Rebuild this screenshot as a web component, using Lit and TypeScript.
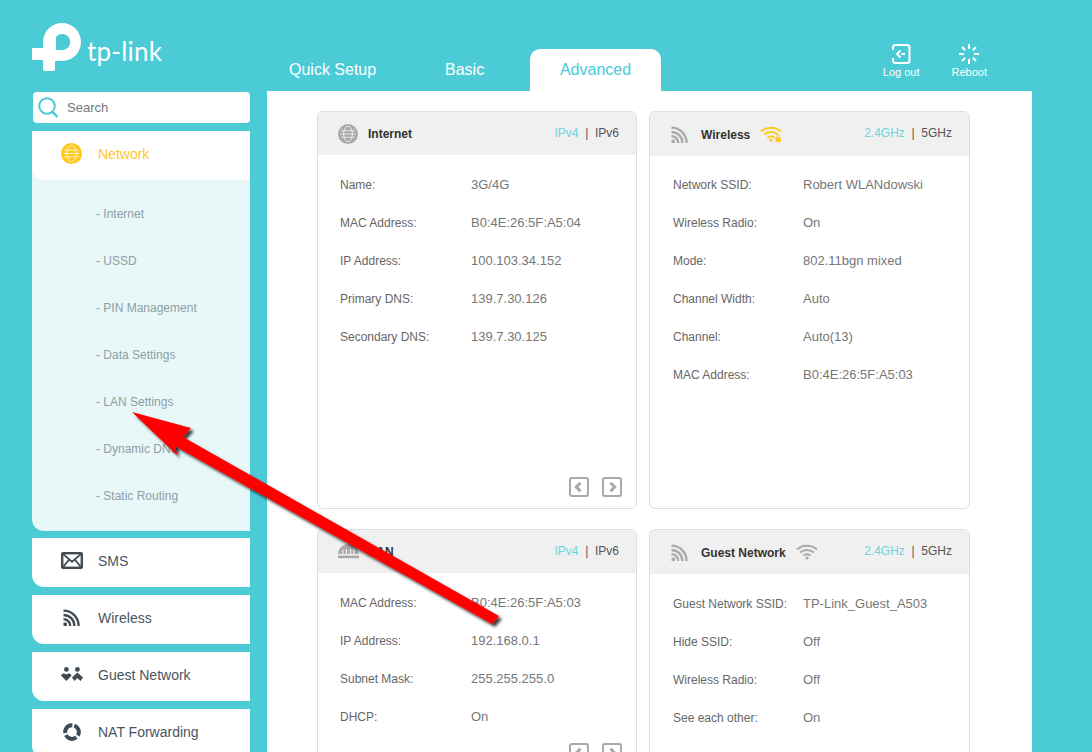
import { LitElement, html, css, svg } from 'lit';
import { customElement } from 'lit/decorators.js';

const globe = (fill: string, size = 21) => html`<svg width="${size}" height="${size}" viewBox="0 0 22 22">
  <circle cx="11" cy="11" r="11" fill="${fill}"></circle>
  <g fill="none" stroke="#fff" stroke-width="1" opacity=".8">
    <ellipse cx="11" cy="11" rx="4.8" ry="8.6"></ellipse>
    <path d="M3.4 7.4H18.6M2.6 11H19.4M3.4 14.6H18.6"></path>
  </g>
</svg>`;

const rss = (fill: string) => html`<svg width="17" height="17" viewBox="0 0 17 17" fill="none" stroke="${fill}" stroke-width="2.3">
  <path d="M.5 1.6C9 1.6 15.6 8.4 15.6 17"></path>
  <path d="M.5 6C6.6 6 11.4 10.8 11.4 17"></path>
  <path d="M.5 10.2C4.4 10.2 7.2 13 7.2 17"></path>
  <rect x=".5" y="13.6" width="3.4" height="3.4" fill="${fill}" stroke="none"></rect>
</svg>`;

const wifi = (fill: string, lock: boolean) => html`<svg width="22" height="16" viewBox="0 0 22 16" fill="none" stroke="${fill}" stroke-width="2">
  <path d="M1 5.4C6.6 .4 15.4 .4 21 5.4"></path>
  <path d="M4.2 8.6C8 5.2 14 5.2 17.8 8.6"></path>
  <path d="M7.6 11.6C9.6 10 12.4 10 14.4 11.6"></path>
  <circle cx="11" cy="14" r="1.5" fill="${fill}" stroke="none"></circle>
  ${lock ? svg`<rect x="15.5" y="11.5" width="5.5" height="4.5" rx=".8" fill="${fill}" stroke="none"></rect>
  <path d="M16.8 12V10.8a1.5 1.5 0 0 1 3 0V12" stroke-width="1"></path>` : ''}
</svg>`;

const lan = html`<svg width="21" height="15" viewBox="0 0 21 15">
  <path d="M0 10A10.5 10 0 0 1 21 10Z" fill="#a9a9a9"></path>
  <path d="M5 5.5V10M8.4 5V10M12.6 5V10M16 5.5V10" stroke="#f0f0f0" stroke-width="1.2"></path>
  <rect y="11.6" width="21" height="2.6" fill="#a9a9a9"></rect>
</svg>`;

const arrowBtn = (d: string) => html`<svg width="20" height="20" viewBox="0 0 20 20">
  <rect x="1" y="1" width="18" height="18" rx="2" fill="none" stroke="#a9a9a9" stroke-width="2"></rect>
  <path d="${d}" fill="none" stroke="#a9a9a9" stroke-width="3"></path>
</svg>`;

type Row = [string, string];
interface Card {
  title: string;
  icon: unknown;
  extra?: unknown;
  left: string;
  right: string;
  rows: Row[];
  pager?: boolean;
}

const cards: Card[] = [
  {
    title: 'Internet', icon: globe('#a9a9a9', 20), left: 'IPv4', right: 'IPv6',
    rows: [['Name:', '3G/4G'], ['MAC Address:', 'B0:4E:26:5F:A5:04'], ['IP Address:', '100.103.34.152'], ['Primary DNS:', '139.7.30.126'], ['Secondary DNS:', '139.7.30.125']],
    pager: true,
  },
  {
    title: 'Wireless', icon: rss('#a9a9a9'), extra: wifi('#ffc81e', true), left: '2.4GHz', right: '5GHz',
    rows: [['Network SSID:', 'Robert WLANdowski'], ['Wireless Radio:', 'On'], ['Mode:', '802.11bgn mixed'], ['Channel Width:', 'Auto'], ['Channel:', 'Auto(13)'], ['MAC Address:', 'B0:4E:26:5F:A5:03']],
  },
  {
    title: 'LAN', icon: lan, left: 'IPv4', right: 'IPv6',
    rows: [['MAC Address:', 'B0:4E:26:5F:A5:03'], ['IP Address:', '192.168.0.1'], ['Subnet Mask:', '255.255.255.0'], ['DHCP:', 'On']],
    pager: true,
  },
  {
    title: 'Guest Network', icon: rss('#a9a9a9'), extra: wifi('#a9a9a9', false), left: '2.4GHz', right: '5GHz',
    rows: [['Guest Network SSID:', 'TP-Link_Guest_A503'], ['Hide SSID:', 'Off'], ['Wireless Radio:', 'Off'], ['See each other:', 'On']],
  },
];

const subItems = ['Internet', 'USSD', 'PIN Management', 'Data Settings', 'LAN Settings', 'Dynamic DNS', 'Static Routing'];

const menuIcons: Record<string, unknown> = {
  SMS: html`<svg width="22" height="17" viewBox="0 0 22 17">
    <rect width="22" height="17" rx="2" fill="#3f4a52"></rect>
    <path d="M2.4 2.4H19.6V14.6H2.4Z" fill="#fff"></path>
    <path d="M2.4 2.4L11 9.8L19.6 2.4M2.4 14.6L8 7.8M19.6 14.6L14 7.8" fill="none" stroke="#3f4a52" stroke-width="1.8"></path>
  </svg>`,
  Wireless: rss('#3f4a52'),
  'Guest Network': html`<svg width="22" height="15" viewBox="0 0 22 15" fill="#3f4a52">
    <circle cx="5.4" cy="2.4" r="2.4"></circle>
    <circle cx="16.4" cy="2.4" r="2.4"></circle>
    <path d="M0 8.4C1.6 6 3.6 6 5.4 7.6C7 6 9 6 10.6 8.4L5.4 14Z"></path>
    <path d="M11 10.6L16.4 5.6L22 10.6L19.6 14L16.4 11L13.4 14Z"></path>
  </svg>`,
  'NAT Forwarding': html`<svg width="18" height="18" viewBox="0 0 20 20" fill="none" stroke="#3f4a52" stroke-width="4.4">
    <circle cx="10" cy="10" r="7.6" stroke-dasharray="13.4 2.5" transform="rotate(-70 10 10)"></circle>
  </svg>`,
};

@customElement('app-root')
export class AppRoot extends LitElement {
  static styles = css`
    :host {
      display: block;
      position: relative;
      height: 752px;
      overflow: hidden;
      background: #4acbd6;
      font-family: "Liberation Sans", Arial, sans-serif;
    }
    .page {
      display: grid;
      grid-template-columns: 218px 765px;
      grid-template-rows: 91px 661px;
      column-gap: 17px;
      padding-left: 32px;
    }
    .logo {
      display: flex;
      align-items: flex-start;
      padding-top: 23px;
      color: #fff;
    }
    .logo-text {
      font-family: Lato, sans-serif;
      font-size: 26px;
      letter-spacing: .2px;
      line-height: 30px;
      margin: 13px 0 0 6px;
    }
    .top {
      display: flex;
      align-items: flex-end;
      position: relative;
    }
    .tab {
      color: #fff;
      font-size: 16px;
      height: 42px;
      line-height: 41px;
      box-sizing: border-box;
    }
    .tab.quick { margin-left: 22px; width: 156px; }
    .tab.basic { width: 85px; }
    .tab.active {
      width: 131px;
      text-align: center;
      background: #fff;
      color: #4acbd6;
      border-radius: 10px 10px 0 0;
    }
    .actions {
      margin-left: auto;
      display: flex;
      gap: 32px;
      padding: 0 45px 13px 0;
      color: #fff;
      font-size: 11px;
      text-align: center;
    }
    .action svg { display: block; margin: 0 auto 2px; }
    .side { margin-top: 1px; display: flex; flex-direction: column; overflow: hidden; }
    .search {
      flex: none;
      height: 31px;
      margin-left: 1px;
      background: #fff;
      border-radius: 4px;
      display: flex;
      align-items: center;
      color: #777;
      font-size: 13px;
      gap: 9px;
      padding-left: 5px;
      box-sizing: border-box;
    }
    .item {
      flex: none;
      background: #fff;
      height: 49px;
      padding-bottom: 4px;
      box-sizing: border-box;
      display: flex;
      align-items: center;
      color: #4a5560;
      font-size: 14px;
      border-radius: 0 0 0 12px;
      margin-bottom: 8px;
      position: relative;
    }
    .item .ico { width: 66px; display: flex; justify-content: center; padding-left: 13px; box-sizing: border-box; }
    .item.open { color: #ffc81e; margin: 8px 0 0; z-index: 1; }
    .sub {
      flex: none;
      background: #e8f8f9;
      margin: -10px 0 7px;
      padding: 21px 0 0 64px;
      height: 361px;
      box-sizing: border-box;
      border-radius: 0 0 0 12px;
      display: flex;
      flex-direction: column;
      color: #8f9ea3;
      font-size: 12px;
    }
    .sub div { height: 47px; line-height: 47px; flex: none; }
    .main {
      background: #fff;
      display: grid;
      grid-template-columns: 320px 321px;
      grid-template-rows: 398px 246px;
      column-gap: 12px;
      row-gap: 20px;
      padding: 20px 0 0 50px;
      box-sizing: border-box;
      overflow: hidden;
    }
    .card {
      border: 1px solid #ddd;
      border-radius: 6px;
      position: relative;
      box-sizing: border-box;
      font-size: 12px;
      color: #666;
    }
    .card-head {
      height: 43px;
      background: #f0f0f0;
      border-radius: 5px 5px 0 0;
      display: flex;
      align-items: center;
      padding: 0 17px 0 20px;
      gap: 10px;
    }
    .card-title { font-weight: bold; color: #333; font-size: 12px; }
    .bands { margin-left: auto; margin-bottom: 2px; color: #555; }
    .bands .on { color: #6fd3dc; }
    .rows { padding: 11px 0 0 22px; }
    .row { display: flex; height: 38px; align-items: center; }
    .row .k { width: 131px; flex: none; }
    .row .v { font-size: 13px; color: #777; margin-top: -2px; }
    .card.right .card-head { height: 44px; padding-left: 21px; }
    .card.right .card-title { margin: 2px 0 0 3px; }
    .card.right .rows { padding: 10px 0 0 23px; }
    .card.right:nth-child(4) .rows { padding-top: 11px; }
    .card.right .row .k { width: 130px; }
    .pager {
      position: absolute;
      right: 14px;
      bottom: 11px;
      display: flex;
      gap: 13px;
    }
    .arrow {
      position: absolute;
      left: 0;
      top: 0;
      pointer-events: none;
    }
  `;

  render() {
    return html`
      <div class="page">
        <div class="logo">
          <svg width="49" height="50" viewBox="0 0 49 50" fill="#fff">
            <path fill-rule="evenodd" d="M0 25H11V19A19 19 0 1 1 30 38H23V46Q23 48 21 48H13Q11 48 11 46V37H0ZM24 27H30A8 8 0 1 0 24 14Z"></path>
          </svg>
          <span class="logo-text">tp-link</span>
        </div>
        <div class="top">
          <div class="tab quick">Quick Setup</div>
          <div class="tab basic">Basic</div>
          <div class="tab active">Advanced</div>
          <div class="actions">
            <div class="action">
              <svg width="20" height="20" viewBox="0 0 20 20" fill="none" stroke="#fff" stroke-width="2">
                <path d="M2 6V3.5Q2 1 4.5 1H16Q18.5 1 18.5 3.5V16.5Q18.5 19 16 19H4.5Q2 19 2 16.5V14"></path>
                <path d="M9.5 6.5L6 10L9.5 13.5M6 10H8M10.5 10H14" stroke-width="1.8"></path>
              </svg>
              Log out
            </div>
            <div class="action">
              <svg width="20" height="20" viewBox="0 0 20 20" fill="none" stroke="#fff" stroke-width="2">
                <path d="M10 0V5M10 15V20M0 10H5M15 10H20M3 3L6.2 6.2M17 3L13.8 6.2M3 17L6.2 13.8M17 17L13.8 13.8"></path>
              </svg>
              Reboot
            </div>
          </div>
        </div>
        <div class="side">
          <div class="search">
            <svg width="20" height="21" viewBox="0 0 20 21" fill="none" stroke="#4acbd6">
              <circle cx="9" cy="9" r="7.8" stroke-width="2"></circle>
              <path d="M14.4 14.6L19.4 19.8" stroke-width="2.4"></path>
            </svg>
            Search
          </div>
          <div class="item open"><span class="ico">${globe('#ffc81e')}</span>Network</div>
          <div class="sub">${subItems.map((s) => html`<div>- ${s}</div>`)}</div>
          ${Object.keys(menuIcons).map((k) => html`<div class="item"><span class="ico">${menuIcons[k]}</span>${k}</div>`)}
        </div>
        <div class="main">
          ${cards.map((c, i) => html`
            <div class="card ${i % 2 ? 'right' : ''}">
              <div class="card-head">
                ${c.icon}
                <span class="card-title">${c.title}</span>
                ${c.extra}
                <span class="bands"><span class="on">${c.left}</span> &nbsp;|&nbsp; ${c.right}</span>
              </div>
              <div class="rows">
                ${c.rows.map((r) => html`<div class="row"><span class="k">${r[0]}</span><span class="v">${r[1]}</span></div>`)}
              </div>
              ${c.pager ? html`<div class="pager">
                ${arrowBtn('M11.5 5.8L7.3 10L11.5 14.2')}
                ${arrowBtn('M8.5 5.8L12.7 10L8.5 14.2')}
              </div>` : ''}
            </div>
          `)}
        </div>
      </div>
      <svg class="arrow" width="1092" height="752" viewBox="0 0 1092 752">
        <defs>
          <filter id="sh" x="-10%" y="-10%" width="120%" height="120%">
            <feDropShadow dx="3" dy="3" stdDeviation="1.6" flood-color="#000" flood-opacity=".75"></feDropShadow>
          </filter>
        </defs>
        <polygon filter="url(#sh)" fill="#f00" points="132,412 191,428 183,437 499,616 492,624 175,446 177,455"></polygon>
      </svg>
    `;
  }
}
